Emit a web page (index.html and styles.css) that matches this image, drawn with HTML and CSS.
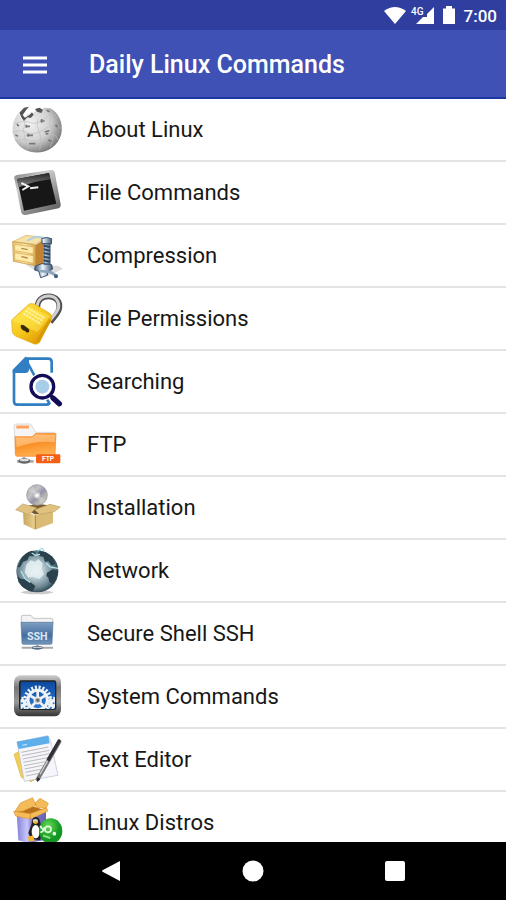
FILE: index.html
```html
<!DOCTYPE html>
<html lang="en">
<head>
<meta charset="utf-8">
<meta name="viewport" content="width=device-width, initial-scale=1">
<title>Daily Linux Commands</title>
<link rel="stylesheet" href="styles.css">
</head>
<body>
<div class="screen">
  <div class="status-bar">
    <svg class="status-icons" viewBox="0 0 72 20" aria-hidden="true">
      <path d="M0 5Q11-3 22 5L11 18Z"/>
      <text x="27" y="9">4G</text>
      <path d="M50 1V18H32L39 11H43V8Z"/>
      <path d="M59 2.500H62V0H68V2.500H71V18H59Z"/>
    </svg>
    <span>7:00</span>
  </div>
  <header class="app-bar">
    <button class="menu-button" type="button" aria-label="Open menu">
      <svg viewBox="0 0 24 18" aria-hidden="true"><path d="M0 2H24M0 9H24M0 16H24"/></svg>
    </button>
    <h1>Daily Linux Commands</h1>
  </header>
  <main class="content">
    <ul class="topics">
      <li><a href="#about">
        <svg viewBox="0 0 240 183" aria-hidden="true">
          <defs><radialGradient id="ball" cx=".35" cy=".35" r=".7"><stop offset="0" stop-color="#f2f2f2"/><stop offset=".6" stop-color="#d0d0d0"/><stop offset="1" stop-color="#777"/></radialGradient></defs>
          <path fill="url(#ball)" d="M56 42C26 75 34 128 72 151C118 176 173 151 184 104C191 71 174 39 151 28L132 26L123 40L108 34L96 48L84 44L69 65L62 56Z"/>
          <path fill="#555" d="M58 41L72 26L87 23L78 34L68 48L75 56L88 48L96 40L101 47L92 57L82 55L72 66L65 57ZM105 30L118 26L129 32L124 42L111 38Z"/>
          <g fill="none" stroke="#bbb" stroke-width="2"><path d="M44 74Q72 63 91 71T135 58T174 57M38 100Q62 90 81 101T134 90T183 89M45 125Q73 119 91 125T138 114T174 123M75 68Q66 92 75 119T83 151M114 60Q107 80 117 98T119 154M151 53Q145 76 155 92T151 144"/></g>
          <g fill="none" stroke="#777" stroke-width="5"><path d="M76 82h14M79 77v9M121 66h13M125 60v11M80 109h19M85 104v9M134 99l14-4M137 106l8-3M87 134h19M46 107l8 5M145 123l9 4M166 78l7 6M51 75l5 7M140 34l9 4"/></g>
        </svg>
        <span>About Linux</span></a></li>
      <li><a href="#files">
        <svg viewBox="0 189 240 183" aria-hidden="true">
          <defs><linearGradient id="frame" x2=".7" y2="1"><stop stop-color="#777"/><stop offset=".35" stop-color="#ccc"/><stop offset="1" stop-color="#666"/></linearGradient><linearGradient id="glass" x2="0" y2="1"><stop stop-color="#252525"/><stop offset="1" stop-color="#888"/></linearGradient></defs>
          <path fill="url(#frame)" d="M51 228L154 213Q161 213 164 219L182 316Q183 325 176 328L77 348Q67 349 64 341L43 238Q42 230 51 228Z"/>
          <path fill="#171717" d="M51 240L147 222L169 314L72 335Z"/>
          <path fill="url(#glass)" d="M51 240L147 222L151 241Q105 246 56 265Z"/>
          <path d="M64 252L85 262L67 273M90 268L115 265" fill="none" stroke="#eee" stroke-width="6"/>
        </svg>
        <span>File Commands</span></a></li>
      <li><a href="#compression">
        <svg viewBox="0 0 240 183" aria-hidden="true">
          <defs><linearGradient id="drawer"><stop stop-color="#eec66c"/><stop offset=".55" stop-color="#fae5a2"/><stop offset="1" stop-color="#d9a94b"/></linearGradient><linearGradient id="clamp"><stop stop-color="#3b5370"/><stop offset=".45" stop-color="#ecf6ff"/><stop offset="1" stop-color="#38506f"/></linearGradient></defs>
          <path fill="#ddd" d="M73 116L175 122L189 131L145 153L107 138Z"/>
          <path fill="#f6e1a6" stroke="#d8b05c" stroke-width="2" d="M38 50L78 31L137 38L106 58Z"/>
          <path fill="url(#drawer)" stroke="#bc8d38" stroke-width="2" d="M38 50L107 60L106 122L40 109Z"/>
          <path fill="#bf8331" d="M107 60L130 45V119L106 122Z"/>
          <path fill="#ffeaa9" stroke="#d0a85b" stroke-width="2" d="M44 58L100 66V87L44 77ZM44 83L100 92V115L44 104Z"/>
          <path d="M64 70L83 74M64 95L83 99" stroke="#b08b46" stroke-width="4"/>
          <path fill="none" stroke="#a9cee6" stroke-width="5" d="M82 47L107 35L138 39"/>
          <path fill="url(#clamp)" stroke="#3c5371" stroke-width="3" d="M125 41Q139 34 155 41L154 57L127 56ZM132 56H150V117H132ZM105 124L125 116L155 119L158 132L144 140L142 151L122 158L116 138L104 135Z"/>
          <path d="M131 62L150 66M131 73L150 77M131 84L150 88M131 95L150 99M131 106L150 110" stroke="#304967" stroke-width="6"/>
          <path d="M121 138L151 141L170 153" fill="none" stroke="#8ba4bd" stroke-width="8"/><circle cx="168" cy="154" r="6" fill="#455e7b"/>
        </svg>
        <span>Compression</span></a></li>
      <li><a href="#permissions">
        <svg viewBox="0 189 240 183" aria-hidden="true">
          <defs><linearGradient id="gold" x2=".8" y2="1"><stop stop-color="#ffe64f"/><stop offset=".55" stop-color="#f7c71c"/><stop offset="1" stop-color="#dc9100"/></linearGradient></defs>
          <path d="M112 247C112 225 127 214 146 214C169 214 181 231 178 249C176 264 163 275 151 291" fill="none" stroke="#515151" stroke-width="17"/>
          <path d="M111 245C113 224 128 213 146 213C167 213 178 229 176 247C173 261 161 272 149 287" fill="none" stroke="#d0d0d0" stroke-width="9"/>
          <path fill="url(#gold)" stroke="#e0a911" stroke-width="2" d="M38 282L85 239Q93 233 103 237L149 265Q158 271 154 282L119 352Q113 359 103 357L48 334Q38 329 37 320L35 291Q34 286 38 282Z"/>
          <path fill="#ffef59" d="M38 286L86 244L151 273L112 321Z" opacity=".45"/>
          <path d="M83 249L135 280M77 257L129 288M70 265L122 297" stroke="#fff2a0" stroke-width="6" stroke-dasharray="8 2"/>
          <path d="M151 284L112 348" stroke="#d99808" stroke-width="9"/>
          <path fill="#382b08" d="M62 302Q64 297 72 301L87 313Q91 323 81 323L75 318Q61 314 62 302Z"/>
        </svg>
        <span>File Permissions</span></a></li>
      <li><a href="#searching">
        <svg viewBox="0 0 240 183" aria-hidden="true">
          <path d="M76 23H145Q155 23 155 34V65M148 157Q145 161 138 161H51Q42 161 42 151V58L76 23Z" fill="none" stroke="#317fc2" stroke-width="8"/>
          <path fill="#317fc2" d="M38 58L75 20H87V55Q87 66 76 66H38Z"/>
          <path d="M151 134L179 159" stroke="#fff" stroke-width="23"/><circle cx="127" cy="107" r="42" fill="#fff"/>
          <circle cx="127" cy="107" r="34" fill="#fff" stroke="#120b57" stroke-width="10"/>
          <circle cx="127" cy="107" r="21" fill="#a7cde8"/>
          <path d="M151 132L159 140" stroke="#120b57" stroke-width="9"/><path d="M159 141L178 158" stroke="#120b57" stroke-width="16" stroke-linecap="round"/>
        </svg>
        <span>Searching</span></a></li>
      <li><a href="#ftp">
        <svg viewBox="0 189 240 183" aria-hidden="true">
          <defs><linearGradient id="orange" x2=".3" y2="1"><stop stop-color="#ffbd6a"/><stop offset=".5" stop-color="#f98d24"/><stop offset="1" stop-color="#ffae4e"/></linearGradient></defs>
          <path fill="#f5f5f5" stroke="#c8c8c8" stroke-width="2" d="M42 224Q42 219 48 219H92L107 244H164V310H48Z"/>
          <path d="M49 228H87" stroke="#ffa05b" stroke-width="9"/>
          <path fill="#ffb767" d="M96 260L107 246H167V274H96Z"/>
          <path fill="url(#orange)" stroke="#f78328" stroke-width="2" d="M45 257H96L107 248H168L165 310Q165 316 158 316H51Q46 315 46 309Z"/>
          <path fill="#ffca8c" opacity=".65" d="M48 260H96L108 251H166L165 274Q112 266 49 289Z"/>
          <path d="M72 317V325M51 331H101" stroke="#aaa" stroke-width="8"/><ellipse cx="73" cy="330" rx="18" ry="8" fill="#666"/><ellipse cx="73" cy="327" rx="14" ry="4" fill="#ddd"/>
          <rect x="108" y="310" width="73" height="27" rx="4" fill="#f45f16"/>
          <text class="ftp-label" x="144" y="331">FTP</text>
        </svg>
        <span>FTP</span></a></li>
      <li><a href="#installation">
        <svg viewBox="0 0 240 183" aria-hidden="true">
          <defs><linearGradient id="disc" x2="1" y2="1"><stop stop-color="#9b9ba0"/><stop offset=".35" stop-color="#c4c4c8"/><stop offset=".55" stop-color="#9793a7"/><stop offset=".75" stop-color="#c0bfb2"/><stop offset="1" stop-color="#858b99"/></linearGradient><linearGradient id="carton"><stop stop-color="#c8a65e"/><stop offset="1" stop-color="#ead091"/></linearGradient></defs>
          <path fill="#76582d" d="M67 91L111 80L164 87L155 110L104 112Z"/>
          <circle cx="111" cy="54" r="31" fill="url(#disc)" stroke="#8c8d93" stroke-width="2"/>
          <path d="M111 54L83 43A30 30 0 0 1 98 27ZM111 54L138 68A31 31 0 0 1 122 83Z" fill="#eee" opacity=".3"/>
          <circle cx="111" cy="55" r="10" fill="#ccc"/><circle cx="111" cy="55" r="5" fill="#fff"/>
          <path fill="url(#carton)" d="M69 101L105 115V158L71 142Z"/><path fill="#d9bb76" d="M105 113L159 104V138L105 158Z"/>
          <path fill="#dfc27f" stroke="#c0a264" stroke-width="2" d="M47 98L68 81L110 92L86 113ZM104 98L150 82L181 90L163 104L119 112Z"/>
          <path d="M106 115V156" stroke="#a88446" stroke-width="3"/>
        </svg>
        <span>Installation</span></a></li>
      <li><a href="#network">
        <svg viewBox="0 189 240 183" aria-hidden="true">
          <defs><radialGradient id="ocean" cx=".46" cy=".48" r=".57"><stop stop-color="#e4edf0"/><stop offset=".35" stop-color="#b4c7ce"/><stop offset=".72" stop-color="#6c8691"/><stop offset="1" stop-color="#1f3945"/></radialGradient></defs>
          <ellipse cx="111" cy="346" rx="48" ry="6" fill="#ccc"/>
          <circle cx="112" cy="283" r="63" fill="url(#ocean)"/>
          <path fill="#29424d" d="M64 244Q76 226 96 221L109 228L100 238L88 237L82 250L69 254L60 271L53 270ZM114 221L137 226L158 241L165 261L155 266L145 253L135 255L130 239L117 237ZM141 287L158 277L174 282Q173 303 159 321L148 315L145 302L139 297ZM52 298L64 306L77 306L91 315L106 327L97 344Q70 339 55 314Z"/>
          <path fill="#e8f2f4" opacity=".8" d="M79 263L91 250L106 254L115 246L128 259L125 276L132 292L118 306L99 299L85 302L74 286Z"/>
          <path d="M95 228L107 235L120 232M139 259L150 270L174 274M63 282L76 306L91 316" fill="none" stroke="#b5e3e9" stroke-width="4"/>
          <path d="M113 225Q127 204 132 223" fill="none" stroke="#75d4de" stroke-width="3"/>
        </svg>
        <span>Network</span></a></li>
      <li><a href="#ssh">
        <svg viewBox="0 0 240 183" aria-hidden="true">
          <defs><linearGradient id="blue" x2="0" y2="1"><stop stop-color="#819fc2"/><stop offset=".6" stop-color="#446f9f"/><stop offset="1" stop-color="#7797ba"/></linearGradient></defs>
          <path fill="#f3f3f3" stroke="#aaa" stroke-width="2" d="M64 59V42Q64 37 69 37H93L100 46H155Q159 46 159 51V60Z"/>
          <path fill="url(#blue)" stroke="#52779f" stroke-width="2" d="M63 58H159L156 121Q156 124 152 124H70Q66 124 66 120Z"/>
          <text class="ssh-label" x="112" y="111">SSH</text>
          <path d="M112 125V133M65 134H159" stroke="#aaa" stroke-width="6"/><ellipse cx="112" cy="134" rx="17" ry="6" fill="#526b83"/><path d="M99 133H126" stroke="#ddd" stroke-width="3"/>
        </svg>
        <span>Secure Shell SSH</span></a></li>
      <li><a href="#system">
        <svg viewBox="0 189 240 183" aria-hidden="true">
          <defs><linearGradient id="metal" x2="0" y2="1"><stop stop-color="#ccc"/><stop offset=".3" stop-color="#777"/><stop offset=".65" stop-color="#999"/><stop offset="1" stop-color="#333"/></linearGradient><linearGradient id="screen" x2="0" y2="1"><stop stop-color="#0c4aa0"/><stop offset="1" stop-color="#307bd3"/></linearGradient><clipPath id="gear-window"><rect x="62" y="236" width="103" height="82"/></clipPath></defs>
          <rect x="42" y="217" width="141" height="123" rx="20" fill="url(#metal)"/>
          <rect x="57" y="232" width="112" height="89" rx="7" fill="#222"/>
          <rect x="62" y="236" width="103" height="82" rx="3" fill="url(#screen)"/>
          <g clip-path="url(#gear-window)" fill="none" stroke="#edf2f5">
            <circle cx="66" cy="301" r="12" stroke-width="15" stroke-dasharray="5 4"/><circle cx="66" cy="301" r="8" stroke-width="10"/>
            <circle cx="161" cy="301" r="12" stroke-width="15" stroke-dasharray="5 4"/><circle cx="161" cy="301" r="8" stroke-width="10"/>
            <circle cx="113" cy="291" r="37" stroke-width="13" stroke-dasharray="6 5"/><circle cx="113" cy="291" r="29" stroke-width="9"/>
            <path d="M113 291V261M113 291L87 276M113 291L139 276M113 291L92 314M113 291L135 314" stroke-width="8"/>
          </g>
          <circle cx="113" cy="292" r="10" fill="#aaa" stroke="#eee" stroke-width="5"/><circle cx="113" cy="292" r="4" fill="#566"/>
        </svg>
        <span>System Commands</span></a></li>
      <li><a href="#editor">
        <svg viewBox="0 0 240 183" aria-hidden="true">
          <path fill="#f1ce54" stroke="#ddb538" stroke-width="2" d="M42 76L61 65L110 149L93 158L64 145Z"/>
          <path fill="#f5f5fb" stroke="#b9bbce" stroke-width="2" d="M51 39L144 20L151 32L174 139L73 157Z"/>
          <path fill="#5daeea" d="M50 38L145 20L149 43L56 60Z"/><path d="M67 49L81 46" stroke="#bbdef8" stroke-width="4"/>
          <path d="M64 70L145 54M66 80L148 64M68 90L149 74M70 100L144 86M72 110L136 98M74 120L128 109M76 130L123 121M78 141L117 133" stroke="#bbb" stroke-width="3"/>
          <path d="M178 38L113 151" stroke="#777" stroke-width="12" stroke-linecap="round"/><path d="M177 36L145 92" stroke="#303038" stroke-width="10" stroke-linecap="round"/><path d="M143 95L120 136" stroke="#ccc" stroke-width="4"/><path fill="#222" d="M111 145L121 150L112 159Z"/>
        </svg>
        <span>Text Editor</span></a></li>
      <li><a href="#distros">
        <svg viewBox="0 189 240 183" aria-hidden="true">
          <defs><linearGradient id="purple"><stop stop-color="#8380d8"/><stop offset=".35" stop-color="#c8c5fb"/><stop offset=".6" stop-color="#8580d0"/><stop offset="1" stop-color="#635bb3"/></linearGradient><radialGradient id="green" cx=".4" cy=".3"><stop stop-color="#65db58"/><stop offset="1" stop-color="#149723"/></radialGradient></defs>
          <path fill="url(#purple)" d="M50 252L89 266L138 246V332L84 342L55 334Z"/><path fill="#6e68b7" opacity=".35" d="M89 265L138 246V332L88 342Z"/>
          <path fill="#b97119" d="M52 248L97 232L137 244L89 263Z"/>
          <path fill="#f5bb58" stroke="#d89734" stroke-width="2" d="M45 247L61 222L98 206L108 229L67 247ZM105 222L120 208L145 223L138 238L109 235ZM41 247L92 254L89 270L47 261ZM91 254L139 236L144 246L92 270Z"/>
          <path fill="#222" d="M95 284Q95 265 107 264Q119 264 121 281L130 306L120 334L93 329L85 312Z"/><ellipse cx="107" cy="308" rx="12" ry="20" fill="#fff"/><ellipse cx="106" cy="276" rx="8" ry="6" fill="#ddd"/>
          <path fill="#f2b62a" d="M98 280L107 275L115 281L106 286ZM83 324L99 319L104 336L87 337Z"/>
          <ellipse cx="152" cy="296" rx="35" ry="38" fill="url(#green)" transform="translate(0 10)"/>
          <g fill="none" stroke="#e6ffe1" stroke-width="5"><path d="M121 290Q124 300 132 301M121 309Q131 311 133 294"/><circle cx="144" cy="301" r="9"/><circle cx="163" cy="314" r="3"/></g><path d="M129 320L151 327" stroke="#8de787" stroke-width="6"/>
        </svg>
        <span>Linux Distros</span></a></li>
    </ul>
  </main>
  <nav class="system-nav" aria-label="System navigation">
    <button type="button" aria-label="Back"><svg viewBox="0 0 22 22" aria-hidden="true"><path d="M20 1V21L3 12Q1 11 3 10Z"/></svg></button>
    <button type="button" aria-label="Home"><svg viewBox="0 0 22 22" aria-hidden="true"><circle cx="11" cy="11" r="10.500"/></svg></button>
    <button type="button" aria-label="Recent apps"><svg viewBox="0 0 22 22" aria-hidden="true"><rect x="1" y="1" width="20" height="20" rx="2"/></svg></button>
  </nav>
</div>
</body>
</html>
```
FILE: styles.css
```css
* { box-sizing: border-box; }

body {
  margin: 0;
  font-family: Roboto, "Liberation Sans", sans-serif;
  color: #171717;
  background: #fff;
}

button {
  padding: 0;
  border: 0;
  background: none;
  cursor: pointer;
}

svg { display: block; flex: none; }

.screen {
  display: flex;
  flex-direction: column;
  height: 100vh;
}

.status-bar {
  display: flex;
  flex: none;
  align-items: center;
  justify-content: flex-end;
  gap: 8px;
  height: 30px;
  padding: 2px 9px 0 0;
  color: #fff;
  background: #303f9f;
  font-size: 17px;
  font-weight: 500;
  line-height: 28px;
}

.status-icons { width: 72px; height: 20px; fill: #fff; }
.status-icons text { font-size: 10px; font-weight: 500; }

.app-bar {
  display: flex;
  flex: none;
  align-items: center;
  gap: 42px;
  height: 69px;
  padding: 2px 0 0 23px;
  color: #fff;
  background: #3f51b5;
  border-bottom: 2px solid #1c37a0;
}

.app-bar h1 {
  margin: 0;
  font-size: 25px;
  font-weight: 500;
  line-height: 34px;
}

.menu-button svg {
  width: 24px;
  height: 18px;
  fill: none;
  stroke: #fff;
  stroke-width: 3;
}

.content {
  flex: 1;
  min-height: 0;
  overflow-y: auto;
  scrollbar-width: none;
}

.topics { margin: 0; padding: 0; list-style: none; }

.topics a {
  display: flex;
  align-items: center;
  gap: 7px;
  height: 63px;
  border-bottom: 2px solid #e4e4e4;
  color: inherit;
  text-decoration: none;
  font-size: 22px;
  line-height: 30px;
}

.topics svg { width: 80px; height: 61px; }

.ftp-label, .ssh-label {
  fill: #fff;
  font-weight: 700;
  text-anchor: middle;
}

.ftp-label { font-size: 20px; }
.ssh-label { font-size: 32px; fill: #dce8f5; }

.system-nav {
  display: flex;
  flex: none;
  align-items: center;
  justify-content: center;
  gap: 94px;
  height: 58px;
  background: #000;
}

.system-nav button {
  display: grid;
  place-items: center;
  width: 48px;
  height: 48px;
}

.system-nav svg { width: 22px; height: 22px; fill: #fff; }
```
